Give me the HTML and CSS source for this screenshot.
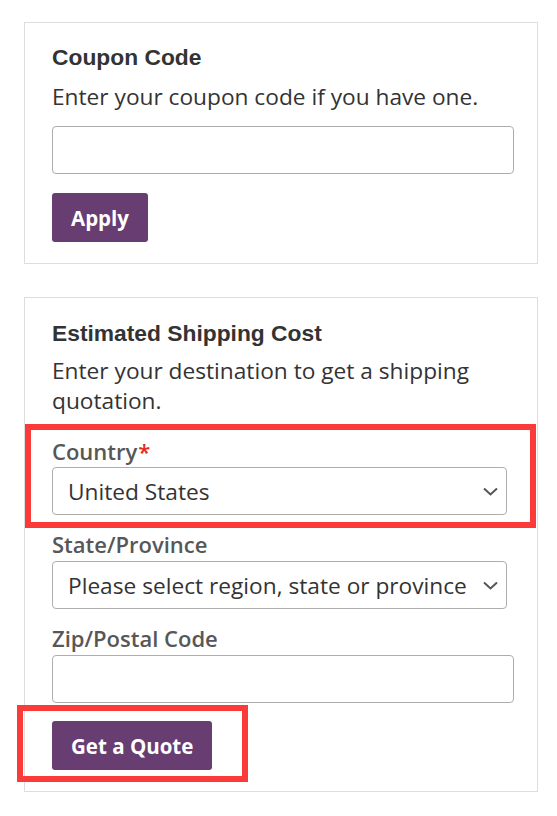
FILE: index.html
```html
<!DOCTYPE html>
<html lang="en">
<head>
    <meta charset="UTF-8">
    <meta name="viewport" content="width=device-width, initial-scale=1.0">
    <title>Cart Discounts and Shipping</title>
    <link rel="stylesheet" href="styles.css">
</head>
<body>
    <div class="page">
        <!-- Coupon block -->
        <div class="card">
            <h2 class="card-title">Coupon Code</h2>
            <p class="card-note">Enter your coupon code if you have one.</p>
            <input class="text-input" type="text" aria-label="Coupon code">
            <button class="btn">Apply</button>
        </div>

        <!-- Shipping estimate block -->
        <div class="card shipping">
            <h2 class="card-title">Estimated Shipping Cost</h2>
            <p class="card-note">Enter your destination to get a shipping quotation.</p>

            <div class="field first">
                <label class="field-label">Country<span class="required">*</span></label>
                <div class="select-wrap">
                    <select class="select-input">
                        <option>United States</option>
                    </select>
                    <svg class="chevron" width="15" height="9" viewBox="0 0 15 9"><polyline points="1,1.5 7.5,7.5 14,1.5" fill="none" stroke="#555" stroke-width="2"/></svg>
                </div>
            </div>

            <div class="field">
                <label class="field-label">State/Province</label>
                <div class="select-wrap">
                    <select class="select-input">
                        <option>Please select region, state or province</option>
                    </select>
                    <svg class="chevron" width="15" height="9" viewBox="0 0 15 9"><polyline points="1,1.5 7.5,7.5 14,1.5" fill="none" stroke="#555" stroke-width="2"/></svg>
                </div>
            </div>

            <div class="field">
                <label class="field-label">Zip/Postal Code</label>
                <input class="text-input" type="text">
            </div>

            <button class="btn quote">Get a Quote</button>
        </div>

        <!-- Annotation frames -->
        <div class="mark mark-country"></div>
        <div class="mark mark-quote"></div>
    </div>
</body>
</html>
```

FILE: styles.css
```css
body {
    margin: 0;
    background-color: #fff;
    font-family: "Open Sans", Arial, sans-serif;
    color: #333;
}

.page {
    position: relative;
    padding: 22px 0 0 24px;
}

.card {
    width: 514px;
    box-sizing: border-box;
    border: 1px solid #ddd;
    padding: 21px 23px 21px 27px;
    margin-bottom: 33px;
}

.shipping {
    padding-top: 22px;
}

.card-title {
    margin: 0;
    font-family: "Liberation Sans", Arial, sans-serif;
    font-size: 22.8px;
    font-weight: bold;
    line-height: 26px;
    color: #333;
}

.card-note {
    margin: 12px 0 0;
    font-size: 22.7px;
    line-height: 30px;
    color: #333;
}

.shipping .card-note {
    margin-top: 10px;
}

.text-input {
    display: block;
    width: 100%;
    height: 48px;
    box-sizing: border-box;
    margin-top: 14px;
    border: 1px solid #adadad;
    border-radius: 4px;
    background: #fff;
    font-family: inherit;
    font-size: 22px;
}

.field {
    margin-top: 14px;
}

.field.first {
    margin-top: 20px;
}

.field .text-input {
    margin-top: 2px;
}

.field-label {
    display: block;
    font-size: 22px;
    font-weight: 600;
    line-height: 30px;
    color: #575757;
}

.required {
    color: #e02b27;
    margin-left: 1px;
}

.select-wrap {
    position: relative;
    width: 455px;
    margin-top: 2px;
}

.field.first .select-wrap {
    margin-top: 1px;
}

.select-input {
    display: block;
    width: 100%;
    height: 48px;
    box-sizing: border-box;
    padding: 0 15px;
    border: 1px solid #adadad;
    border-radius: 4px;
    background: #fff;
    -webkit-appearance: none;
    appearance: none;
    font-family: inherit;
    font-size: 22.7px;
    color: #333;
}

.chevron {
    position: absolute;
    right: 9px;
    top: 20px;
    pointer-events: none;
}

.btn {
    display: block;
    height: 49px;
    margin-top: 19px;
    padding: 0 19px;
    border: none;
    border-radius: 3px;
    background-color: #673d72;
    color: #fff;
    font-family: inherit;
    font-size: 20.5px;
    font-weight: 700;
    cursor: pointer;
}

.btn.quote {
    margin-top: 18px;
}

.mark {
    position: absolute;
    box-sizing: border-box;
    border: 6px solid #fb3a3a;
    pointer-events: none;
}

.mark-country {
    left: 25px;
    top: 424px;
    width: 511px;
    height: 104px;
}

.mark-quote {
    left: 17px;
    top: 705px;
    width: 231px;
    height: 77px;
}
```
